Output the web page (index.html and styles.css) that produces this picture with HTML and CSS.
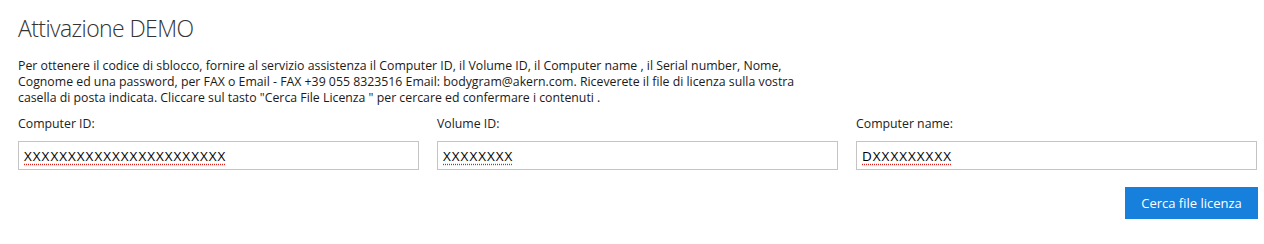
FILE: index.html
```html
<!DOCTYPE html>
<html lang="it">
<head>
<meta charset="utf-8">
<title>Attivazione DEMO</title>
<link rel="stylesheet" href="styles.css">
</head>
<body>
<main class="page">
  <h1 class="title">Attivazione DEMO</h1>
  <p class="intro">Per ottenere il codice di sblocco, fornire al servizio assistenza il Computer ID, il Volume ID, il Computer name , il Serial number, Nome,<br>Cognome ed una password, per FAX o Email - FAX +39 055 8323516 Email: bodygram@akern.com. Riceverete il file di licenza sulla vostra<br>casella di posta indicata. Cliccare sul tasto "Cerca File Licenza " per cercare ed confermare i contenuti .</p>
  <div class="fields">
    <div class="field">
      <label class="label">Computer ID:</label>
      <div class="box"><span class="value">XXXXXXXXXXXXXXXXXXXXXXX</span></div>
    </div>
    <div class="field">
      <label class="label">Volume ID:</label>
      <div class="box"><span class="value">XXXXXXXX</span></div>
    </div>
    <div class="field">
      <label class="label">Computer name:</label>
      <div class="box"><span class="value">DXXXXXXXXX</span></div>
    </div>
  </div>
  <div class="actions">
    <button class="btn" type="button">Cerca file licenza</button>
  </div>
</main>
</body>
</html>
```
FILE: styles.css
```css
html, body {
  margin: 0;
  padding: 0;
  background: #ffffff;
}
body {
  font-family: "Open Sans", "Noto Sans", "Liberation Sans", sans-serif;
  color: #1f1f1f;
}
.page {
  padding: 12px 6px 0 18px;
}
.title {
  margin: 0;
  font-size: 23px;
  font-weight: 300;
  line-height: 32px;
  color: #333333;
  letter-spacing: -0.6px;
}
.intro {
  margin: 14px 0 0 0;
  font-size: 12.3px;
  line-height: 16px;
  color: #1a1a1a;
  white-space: nowrap;
}
.fields {
  display: grid;
  grid-template-columns: repeat(3, 401px);
  column-gap: 18px;
  margin-top: 9px;
}
.field {
  display: flex;
  flex-direction: column;
}
.label {
  font-size: 12.3px;
  line-height: 18px;
  color: #222222;
  margin-bottom: 8px;
}
.box {
  height: 27px;
  border: 1px solid #c4c4c4;
  box-sizing: content-box;
  display: flex;
  align-items: center;
  padding: 0 5px;
}
.value {
  font-size: 13.5px;
  color: #000000;
  letter-spacing: 1px;
  text-decoration: underline dotted #e0201c;
  text-underline-offset: 3px;
}
.actions {
  display: flex;
  justify-content: flex-end;
  margin-top: 17px;
  padding-right: 0;
}
.btn {
  width: 133px;
  height: 32px;
  border: none;
  background: #1680dc;
  color: #ffffff;
  font-family: inherit;
  font-size: 13px;
  padding: 0;
  cursor: pointer;
}
```
